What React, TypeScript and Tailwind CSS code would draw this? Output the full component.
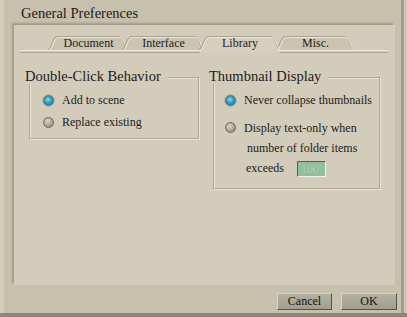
import React from "react";

function Tab({
  label,
  w,
  active,
  cls,
}: {
  label: string;
  w: number;
  active?: boolean;
  cls: string;
}) {
  const h = active ? 17 : 14;
  const d = `M0.5,${h} C4,${14} 5,1 10,1 L${w - 10},1 C${w - 5},1 ${w - 4},${14} ${w - 0.5},${h}`;
  return (
    <div className={`relative h-[14px] ${cls} ${active ? "z-10" : ""}`}>
      <svg className="absolute left-0 top-0" width={w} height={h} viewBox={`0 0 ${w} ${h}`}>
        <path d={d} fill={active ? "#d6cfbd" : "#cbc4b1"} stroke="none" />
        <path
          d={`M0.5,14 C4,14 5,1 10,1 L${w - 10},1 C${w - 5},1 ${w - 4},14 ${w - 0.5},14`}
          fill="none"
          stroke="#a69f8c"
          strokeWidth="1"
          transform="translate(-0.6,-0.6)"
        />
        <path
          d={`M0.5,14 C4,14 5,1 10,1 L${w - 10},1 C${w - 5},1 ${w - 4},14 ${w - 0.5},14`}
          fill="none"
          stroke="#eee8d9"
          strokeWidth="1"
          transform="translate(0.5,0.6)"
        />
      </svg>
      <span className="relative block text-center text-[12px] leading-[14px] text-[#1e1e1e]">
        {label}
      </span>
    </div>
  );
}

function Radio({ on }: { on?: boolean }) {
  return (
    <span
      className={`block w-[11px] h-[11px] shrink-0 rounded-full border border-[#6c685c] ${
        on
          ? "bg-[radial-gradient(circle_at_45%_40%,#8fdcf5_0%,#2a9fcb_45%,#1a6f93_100%)] shadow-[0_0_0_1px_#b9b4a5]"
          : "bg-[radial-gradient(circle_at_40%_35%,#dcd7c9_0%,#a9a495_55%,#7f7a6c_100%)]"
      }`}
    />
  );
}

function Group({
  title,
  cls,
  children,
}: {
  title: string;
  cls: string;
  children: React.ReactNode;
}) {
  return (
    <div
      className={`relative border border-[#b0a996] shadow-[1px_1px_0_#e9e3d4,inset_1px_1px_0_#e9e3d4] ${cls}`}
    >
      <div className="absolute left-[-5px] top-[-10px] bg-[#d3ccba] pr-[8px] text-[14.5px] leading-[16px] text-[#1b1b1b]">
        {title}
      </div>
      {children}
    </div>
  );
}

export default function App() {
  return (
    <div
      className="w-[407px] h-[317px] bg-[#8d877a] overflow-hidden"
      style={{ fontFamily: '"Liberation Serif", "Times New Roman", serif' }}
    >
      <div className="w-[407px] h-[313px] bg-[#cdc7b5]">
        <div className="w-[404px] h-[313px] flex flex-col bg-[#c7c0ad] border-l-[4px] border-l-[#d3cdbc] border-r-[3px] border-r-[#a49d8a]">
          {/* Title */}
          <div className="h-[25px] pl-[17px] pt-[4px] text-[14.5px] leading-[18px] text-[#1b1b1b]">
            General Preferences
          </div>

          {/* Inner panel */}
          <div className="ml-[10px] w-[381px] h-[260px] bg-[#d3ccba] shadow-[-2px_-2px_2px_rgba(90,80,60,0.35)] flex flex-col pt-[11px]">
            {/* Tabs */}
            <div className="ml-[6px] w-[368px]">
              <div className="flex items-end pl-[28px] h-[14px]">
                <Tab label="Document" w={81} cls="w-[81px]" />
                <Tab label="Interface" w={83} cls="w-[83px] ml-[-7px]" />
                <Tab label="Library" w={82} active cls="w-[82px] ml-[-6px]" />
                <Tab label="Misc." w={79} cls="w-[79px] ml-[-5px]" />
              </div>
              <div className="h-[3px] border-t border-t-[#eee8d9] border-b border-b-[#aca591] bg-[#d3ccba]" />
            </div>

            {/* Groups */}
            <div className="flex items-start pl-[15px] gap-[14px] mt-[24px]">
              <Group title="Double-Click Behavior" cls="w-[170px] h-[62px]">
                <div className="flex flex-col gap-[6px] pt-[14px] pl-[13px] text-[12px] leading-[16px] text-[#1b1b1b]">
                  <div className="flex items-center gap-[8px] h-[16px]">
                    <Radio on />
                    <span>Add to scene</span>
                  </div>
                  <div className="flex items-center gap-[8px] h-[16px]">
                    <Radio />
                    <span>Replace existing</span>
                  </div>
                </div>
              </Group>

              <Group title="Thumbnail Display" cls="w-[167px] h-[112px]">
                <div className="flex flex-col pt-[14px] pl-[11px] text-[12px] text-[#1b1b1b]">
                  <div className="flex items-center gap-[8px] h-[16px] leading-[16px]">
                    <Radio on />
                    <span>Never collapse thumbnails</span>
                  </div>
                  <div className="flex items-start gap-[8px] mt-[10px] leading-[20px]">
                    <span className="mt-[4px]">
                      <Radio />
                    </span>
                    <div className="flex flex-col">
                      <span>Display text-only when</span>
                      <span className="pl-[3px]">number of folder items</span>
                      <div className="flex items-center pl-[2px] h-[20px]">
                        <span>exceeds</span>
                        <div className="ml-[13px] mt-[1px] w-[29px] h-[16px] border border-t-[#5d5a50] border-l-[#5d5a50] border-r-[#f4f1e8] border-b-[#f4f1e8] bg-[#8fc09c] text-[12px] leading-[14px] pl-[3px] text-[#b4c9b8]">
                          100
                        </div>
                      </div>
                    </div>
                  </div>
                </div>
              </Group>
            </div>
          </div>

          {/* Buttons */}
          <div className="flex justify-end gap-[9px] pr-[4px] mt-[8px]">
            <button className="w-[55px] h-[17px] bg-[linear-gradient(#b2b0a0,#a19f8e)] border border-t-[#d8d5c8] border-l-[#d8d5c8] border-r-[#55524a] border-b-[#55524a] text-[12px] leading-[15px] text-[#111]">
              Cancel
            </button>
            <button className="w-[56px] h-[17px] bg-[linear-gradient(#b2b0a0,#a19f8e)] border border-t-[#d8d5c8] border-l-[#d8d5c8] border-r-[#55524a] border-b-[#55524a] text-[12px] leading-[15px] text-[#111]">
              OK
            </button>
          </div>
        </div>
      </div>
    </div>
  );
}
